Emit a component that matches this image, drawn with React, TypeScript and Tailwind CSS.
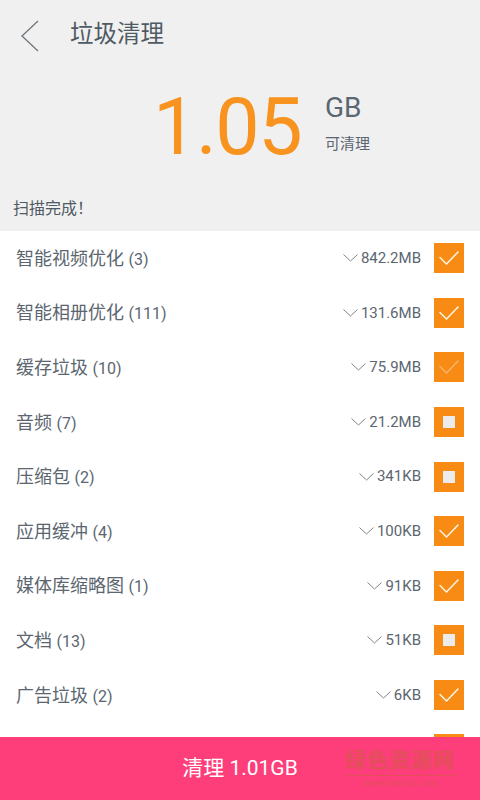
type Item = {
  name: string;
  count: number;
  size: string;
  state: 'on' | 'off' | 'dim';
};

const items: Item[] = [
  { name: '智能视频优化', count: 3, size: '842.2MB', state: 'on' },
  { name: '智能相册优化', count: 111, size: '131.6MB', state: 'on' },
  { name: '缓存垃圾', count: 10, size: '75.9MB', state: 'dim' },
  { name: '音频', count: 7, size: '21.2MB', state: 'off' },
  { name: '压缩包', count: 2, size: '341KB', state: 'off' },
  { name: '应用缓冲', count: 4, size: '100KB', state: 'on' },
  { name: '媒体库缩略图', count: 1, size: '91KB', state: 'on' },
  { name: '文档', count: 13, size: '51KB', state: 'off' },
  { name: '广告垃圾', count: 2, size: '6KB', state: 'on' },
];

const CheckBox = ({ state }: { state: Item['state'] }) => (
  <div className="w-[30px] h-[30px] bg-[#f88b14] flex items-center justify-center shrink-0">
    {state === 'off' ? (
      <div className="w-[12px] h-[12px] bg-[#ececec]" />
    ) : (
      <svg width="22" height="16" viewBox="0 0 22 16" fill="none">
        <path
          d="M2 7.5 L8.5 14 L20 2"
          stroke={state === 'dim' ? '#f6b36a' : '#fff6e6'}
          strokeWidth="1.5"
          strokeLinecap="round"
          strokeLinejoin="round"
        />
      </svg>
    )}
  </div>
);

const Row = ({ item }: { item: Item }) => (
  <div className="h-[54.6px] flex items-center px-[16px] shrink-0">
    <span className="flex-1 text-[18px] text-[#5b6670]">
      {item.name} <span className="text-[16px]">({item.count})</span>
    </span>
    <div className="flex items-center gap-[3px] text-[15px] text-[#5b6670]">
      <svg width="15" height="8" viewBox="0 0 15 8" fill="none">
        <path d="M0.5 0.5 L7.5 7 L14.5 0.5" stroke="#7d858c" strokeWidth="1" />
      </svg>
      <span>{item.size}</span>
    </div>
    <div className="ml-[13px]">
      <CheckBox state={item.state} />
    </div>
  </div>
);

export default function App() {
  return (
    <div
      className="w-[480px] h-[800px] flex flex-col bg-white overflow-hidden"
      style={{ fontFamily: "Roboto, 'Noto Sans CJK SC', sans-serif" }}
    >
      <div className="h-[231px] bg-[#f0f0f0] flex flex-col shrink-0">
        <div className="h-[72px] flex items-center pl-[20px]">
          <svg width="20" height="32" viewBox="0 0 20 32" fill="none">
            <path d="M18 1 L2 16 L18 31" stroke="#737a81" strokeWidth="1.4" />
          </svg>
          <span className="ml-[30px] text-[23.5px] text-[#4f5a64] -mt-[2px]">垃圾清理</span>
        </div>
        <div className="flex items-start pl-[153px] gap-[24px] h-[100px]">
          <span className="text-[79px] leading-none text-[#f7931e] mt-[16px] tracking-[-1.5px]">1.05</span>
          <div className="flex flex-col mt-[22px]">
            <span className="text-[28px] leading-none text-[#5b6670]">GB</span>
            <span className="text-[15px] text-[#5b6670] mt-[11px]">可清理</span>
          </div>
        </div>
        <div className="mt-auto mb-[10px] pl-[13px] text-[16px] text-[#4f5a64]">扫描完成！</div>
      </div>
      <div className="flex-1 flex flex-col overflow-hidden">
        {items.map((item) => (
          <Row key={item.name} item={item} />
        ))}
        <div className="flex justify-end pr-[16px] pt-[12px] shrink-0">
          <CheckBox state="on" />
        </div>
      </div>
      <div className="h-[63px] bg-[#fe3e7a] flex items-center justify-center shrink-0 relative">
        <span className="text-[21px] text-white">清理 1.01GB</span>
        <div className="absolute left-[344px] top-[13px] flex flex-col items-center opacity-50">
          <span className="text-[21px] font-bold leading-none text-[#c8603a] tracking-[1px]">绿色资源网</span>
          <div className="w-[112px] h-px bg-[#c8603a] mt-[4px]" />
          <span className="text-[9px] leading-none text-[#c8603a] mt-[3px]">www.downcc.com</span>
        </div>
      </div>
    </div>
  );
}
